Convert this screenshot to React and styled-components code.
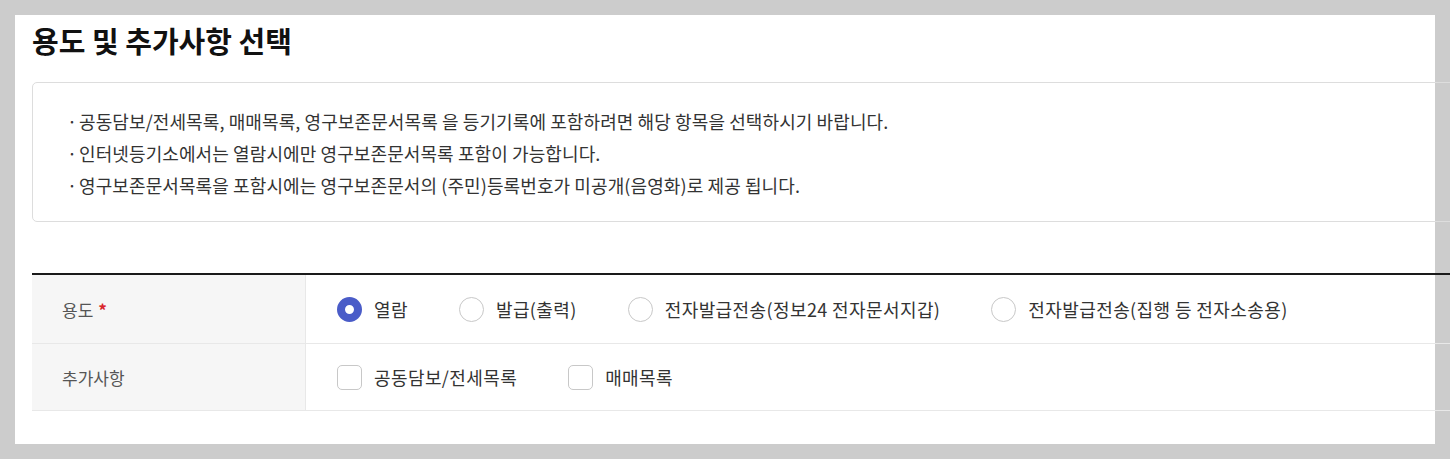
import styled, { createGlobalStyle } from "styled-components";

const GlobalStyle = createGlobalStyle`
  html, body {
    margin: 0;
    padding: 0;
    background: #cccccc;
    overflow: hidden;
  }
  body {
    font-family: "Noto Sans CJK KR", "Noto Sans", sans-serif;
    color: #333;
  }
`;

const Page = styled.div`
  padding: 15px;
  height: 459px;
  box-sizing: border-box;
`;

const Panel = styled.div`
  width: 1420px;
  height: 429px;
  box-sizing: border-box;
  background: #fff;
  padding: 5px 0 0 17px;
`;

const Content = styled.div`
  width: 1440px;
`;

const Title = styled.h2`
  margin: 0;
  font-size: 29px;
  font-weight: 700;
  line-height: 40px;
  color: #111;
`;

const InfoBox = styled.ul`
  list-style: none;
  margin: 22px 0 0;
  padding: 22px 0 20px 34px;
  border: 1px solid #dddddd;
  border-radius: 5px;
`;

const InfoItem = styled.li`
  position: relative;
  padding-left: 12px;
  font-size: 18px;
  line-height: 32px;
  letter-spacing: 0.1px;
  color: #333;
  &::before {
    content: "·";
    position: absolute;
    left: 0;
  }
`;

const Table = styled.div`
  margin-top: 51px;
  border-top: 2px solid #1a1a1a;
`;

const Row = styled.div`
  display: grid;
  grid-template-columns: 274px 1fr;
  height: ${(p) => p.$h}px;
  border-bottom: 1px solid #e8e8e8;
`;

const Label = styled.div`
  display: flex;
  align-items: center;
  padding-left: 30px;
  background: #f6f6f6;
  border-right: 1px solid #e8e8e8;
  font-size: 17px;
  color: #555;
`;

const Required = styled.span`
  color: #d9262c;
  margin-left: 5px;
  font-weight: 700;
`;

const Options = styled.div`
  display: flex;
  align-items: center;
  gap: ${(p) => p.$gap}px;
  padding-left: 31px;
`;

const Option = styled.label`
  display: flex;
  align-items: center;
  gap: 12px;
  font-size: 18px;
  letter-spacing: 0.4px;
  color: #333;
`;

const Radio = styled.span`
  width: 25px;
  height: 25px;
  box-sizing: border-box;
  border-radius: 50%;
  border: ${(p) => (p.$checked ? "8px solid #4a5cc8" : "1px solid #c8c8c8")};
  background: #fff;
`;

const Check = styled.span`
  width: 25px;
  height: 25px;
  box-sizing: border-box;
  border-radius: 5px;
  border: 1px solid #c8c8c8;
  background: #fff;
`;

const purposes = [
  "열람",
  "발급(출력)",
  "전자발급전송(정보24 전자문서지갑)",
  "전자발급전송(집행 등 전자소송용)",
];

const extras = ["공동담보/전세목록", "매매목록"];

export default function App() {
  return (
    <>
      <GlobalStyle />
      <Page>
        <Panel>
          <Content>
            <Title>용도 및 추가사항 선택</Title>
            <InfoBox>
              <InfoItem>
                공동담보/전세목록, 매매목록, 영구보존문서목록 을 등기기록에 포함하려면 해당 항목을 선택하시기 바랍니다.
              </InfoItem>
              <InfoItem>인터넷등기소에서는 열람시에만 영구보존문서목록 포함이 가능합니다.</InfoItem>
              <InfoItem>
                영구보존문서목록을 포함시에는 영구보존문서의 (주민)등록번호가 미공개(음영화)로 제공 됩니다.
              </InfoItem>
            </InfoBox>
            <Table>
              <Row $h={68}>
                <Label>
                  용도<Required>*</Required>
                </Label>
                <Options $gap={51}>
                  {purposes.map((p, i) => (
                    <Option key={p}>
                      <Radio $checked={i === 0} />
                      {p}
                    </Option>
                  ))}
                </Options>
              </Row>
              <Row $h={66}>
                <Label>추가사항</Label>
                <Options $gap={51}>
                  {extras.map((e) => (
                    <Option key={e}>
                      <Check />
                      {e}
                    </Option>
                  ))}
                </Options>
              </Row>
            </Table>
          </Content>
        </Panel>
      </Page>
    </>
  );
}
